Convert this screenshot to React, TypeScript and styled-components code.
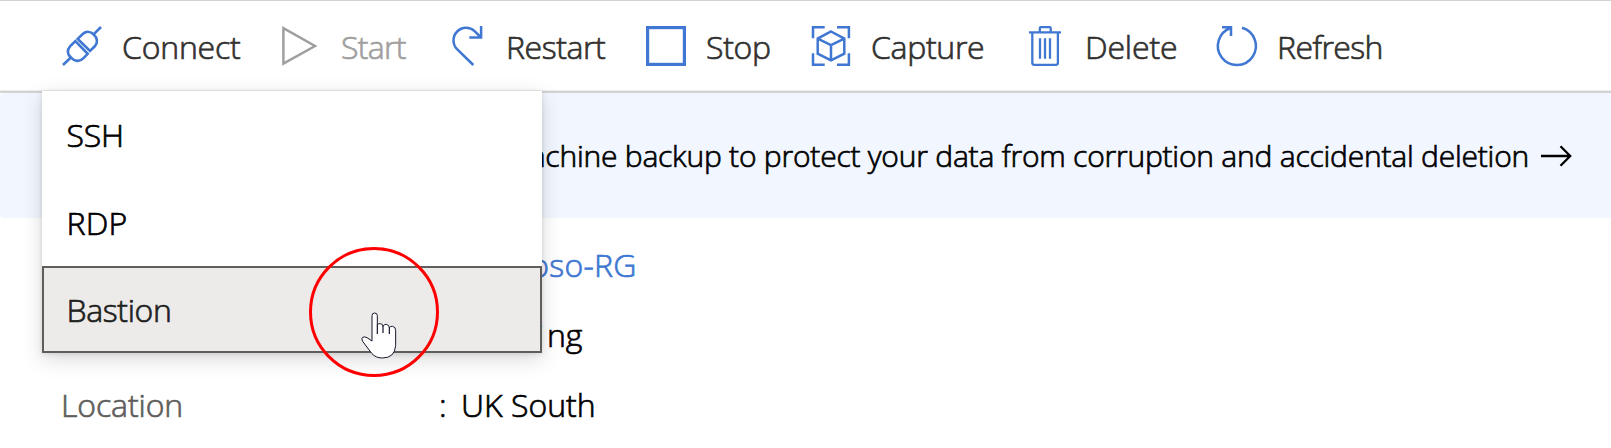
import React from 'react';
import styled, { createGlobalStyle } from 'styled-components';

const GlobalStyle = createGlobalStyle`
  * { box-sizing: border-box; }
  body {
    margin: 0;
    background: #fff;
    color: #000;
    font-family: "Open Sans", "Noto Sans", sans-serif;
    font-weight: 300;
    font-size: 32px;
    overflow: hidden;
  }
`;

const Page = styled.div`
  position: relative;
  height: 448px;
  overflow: hidden;
`;

const Toolbar = styled.div`
  display: flex;
  height: 93px;
  padding: 25px 0 0 62px;
  border-top: 1px solid #d2d2d2;
  border-bottom: 2px solid #d3d3d3;
  box-shadow: inset 0 -1px 0 #ececec;
`;

const Command = styled.div<{ $width: number; $disabled?: boolean }>`
  display: flex;
  flex: none;
  gap: 20px;
  width: ${(p) => p.$width}px;
  height: 40px;
  color: ${(p) => (p.$disabled ? '#a09f9e' : '#323130')};
`;

const Text = styled.span<{ $spacing?: number }>`
  letter-spacing: ${(p) => p.$spacing ?? 0}px;
  line-height: 41px;
  white-space: nowrap;
  -webkit-text-stroke: 0.7px currentColor;
`;

const Icon = styled.svg<{ $disabled?: boolean }>`
  flex: none;
  width: 40px;
  height: 40px;
  overflow: visible;
  fill: none;
  stroke: ${(p) => (p.$disabled ? '#a09f9e' : '#4077d2')};
  stroke-width: 2.5;
`;

const Banner = styled.div`
  display: flex;
  align-items: center;
  justify-content: flex-end;
  gap: 12px;
  height: 125px;
  padding-right: 39px;
  border-radius: 4px 0 0 4px;
  background: #f1f6ff;
  font-size: 30px;
`;

const Arrow = styled.svg`
  flex: none;
  width: 31px;
  height: 22px;
  fill: none;
  stroke: #000;
  stroke-width: 2.3;
`;

const Details = styled.dl`
  margin: 11px 0 0 61px;
`;

const Detail = styled.div`
  display: grid;
  grid-template-columns: 378px 22px auto;
  align-items: center;
  height: 70px;
`;

const Term = styled.dt`
  color: #605e5c;
`;

const Value = styled.dd<{ $link?: boolean }>`
  margin: 0;
  color: ${(p) => (p.$link ? '#4077d2' : '#000')};
`;

const Ending = styled.span`
  margin-left: 3px;
`;

const Menu = styled.div`
  position: absolute;
  left: 42px;
  top: 91px;
  width: 500px;
  height: 262px;
  background: #fff;
  box-shadow: 0 6px 20px rgba(0, 0, 0, 0.15), 0 1px 5px rgba(0, 0, 0, 0.11);
`;

const MenuItem = styled.div<{ $active?: boolean }>`
  display: flex;
  align-items: center;
  height: 87.5px;
  padding: 0 0 0 22.5px;
  border: 2px solid transparent;
  ${(p) =>
    p.$active &&
    `height: 87px;
    border-color: #605e5c;
    background: #edebe9;
    color: #201f1e;`}
`;

const Highlight = styled.div`
  position: absolute;
  left: 309px;
  top: 247px;
  width: 130px;
  height: 130px;
  border: 3px solid #f00;
  border-radius: 50%;
`;

const Pointer = styled.svg`
  position: absolute;
  left: 360.8px;
  top: 311.8px;
  width: 36px;
  height: 47px;
`;

const icons = {
  connect: (
    <g strokeWidth="2.6">
      <path d="M1 39 9.3 31M39 1 31.3 8.7" />
      <path d="M13.3 15.2 8.3 20.2C4.7 24 5.2 28.2 9 31.5C12.5 35.8 18 36 21.5 32.2L25.7 27.8Z" />
      <path d="M15.7 12.9 21 7.8C24.3 5 28.6 5.4 31.7 8.5C35.6 12 36 16.8 32.8 20.3L28 25Z" />
    </g>
  ),
  start: <path d="M2.4 2.2V37.6L34 20Z" />,
  restart: <path d="M27.3 39 10.8 22.9A12.6 12.6 0 0 1 28.6 5.1L35 11.5M23.3 11.4H35.1V0" />,
  stop: <rect x="1.6" y="1.6" width="36.8" height="36.8" strokeWidth="3.2" />,
  capture: (
    <>
      <path d="M2 12.3V1.2H13.7M26 1.2H37.9V12.3M37.9 27.3V38.8H26M13.7 38.8H2V27.3" />
      <path d="M20 5.5 33.3 12.6V27.7L20 34.4 6.7 27.7V12.6ZM6.7 12.6 20 19.2 33.3 12.6M20 19.2V34.4" />
    </>
  ),
  delete: (
    <g strokeWidth="2.3">
      <path d="M4 6.4H36M14.8 6V2.2Q14.8 1.1 15.9 1.1H24.6Q25.7 1.1 25.7 2.2V6" />
      <path d="M7.3 6.4V36.8Q7.3 38.8 9.3 38.8H30.9Q32.9 38.8 32.9 36.8V6.4" />
      <path d="M15 12.3V32.7M20 12.3V32.7M25 12.3V32.7" />
    </g>
  ),
  refresh: <path d="M25 1.7A19 19 0 1 1 13.8 2M5 1.2H14V10" />,
};

type CommandSpec = { icon: keyof typeof icons; label: string; width: number; spacing: number; disabled?: boolean };

const commands: CommandSpec[] = [
  { icon: 'connect', label: 'Connect', width: 219, spacing: -0.2 },
  { icon: 'start', label: 'Start', width: 165, spacing: -0.7, disabled: true },
  { icon: 'restart', label: 'Restart', width: 200, spacing: -0.45 },
  { icon: 'stop', label: 'Stop', width: 165, spacing: -0.3 },
  { icon: 'capture', label: 'Capture', width: 214, spacing: -0.3 },
  { icon: 'delete', label: 'Delete', width: 192, spacing: -0.15 },
  { icon: 'refresh', label: 'Refresh', width: 180, spacing: -0.6 },
];

type DetailSpec = { id: string; term?: string; value: React.ReactNode; link?: boolean; spacing: number };

const details: DetailSpec[] = [
  { id: 'group', value: 'Contoso-RG', link: true, spacing: 0.25 },
  { id: 'status', value: <>Runni<Ending>ng</Ending></>, spacing: 0 },
  { id: 'location', term: 'Location', value: 'UK South', spacing: 0 },
];

export default function App() {
  return (
    <Page>
      <GlobalStyle />
      <Toolbar>
        {commands.map((c) => (
          <Command key={c.icon} $width={c.width} $disabled={c.disabled}>
            <Icon viewBox="0 0 40 40" $disabled={c.disabled}>{icons[c.icon]}</Icon>
            <Text $spacing={c.spacing}>{c.label}</Text>
          </Command>
        ))}
      </Toolbar>
      <Banner>
        <Text $spacing={-0.22}>machine backup to protect your data from corruption and accidental deletion</Text>
        <Arrow viewBox="0 0 31 22">
          <path d="M0 11H29.5M19.5 1.3 29.2 11 19.5 20.7" />
        </Arrow>
      </Banner>
      <Details>
        {details.map((d) => (
          <Detail key={d.id}>
            <Term>{d.term && <Text $spacing={-0.1}>{d.term}</Text>}</Term>
            <Text>{d.term && ':'}</Text>
            <Value $link={d.link}><Text $spacing={d.spacing}>{d.value}</Text></Value>
          </Detail>
        ))}
      </Details>
      <Menu>
        <MenuItem><Text $spacing={-0.2}>SSH</Text></MenuItem>
        <MenuItem><Text $spacing={0.2}>RDP</Text></MenuItem>
        <MenuItem $active><Text $spacing={-0.35}>Bastion</Text></MenuItem>
      </Menu>
      <Highlight />
      <Pointer viewBox="211 244 108 141">
        <path
          d="M244 331V255Q244 247 252 247Q260 247 260 255V283Q263 278 269 279Q277 280 277 287Q281 280 287 281Q296 283 296 291Q300 286 306 287Q315 289 315 299V345Q312 382 275 382Q255 382 243 368L216 332Q211 323 216 320Q222 317 229 321Z"
          fill="#fff"
          stroke="#15152b"
          strokeWidth="3"
        />
        <path d="M260 282V310M277 286V307M296 290V310" fill="none" stroke="#15152b" strokeWidth="3.6" />
      </Pointer>
    </Page>
  );
}
